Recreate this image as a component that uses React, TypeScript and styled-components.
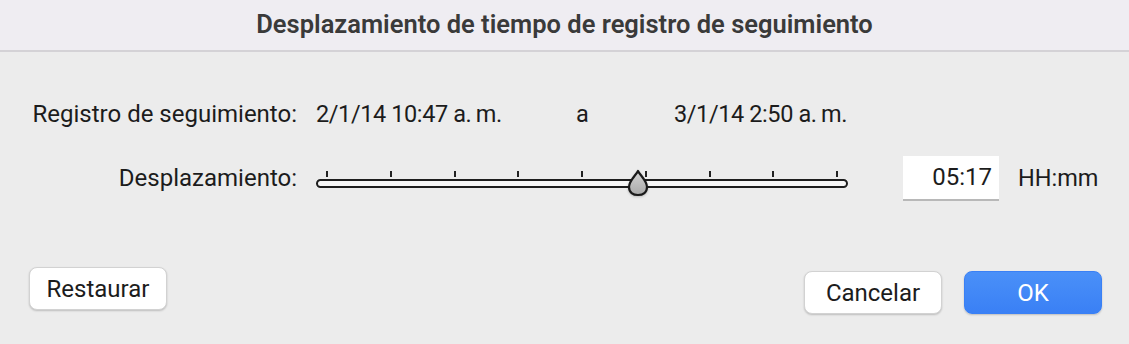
import React from 'react'
import styled, { createGlobalStyle } from 'styled-components'

const TICKS = 9
const OFFSET = 0.605

export default function App() {
  return (
    <>
      <Global />
      <Dialog>
        <TitleBar>Desplazamiento de tiempo de registro de seguimiento</TitleBar>
        <Body>
          <Row>
            <Label>Registro de seguimiento:</Label>
            <Range>
              <Value>2/1/14 10:47 a.{'\u2009'}m.</Value>
              <Value>a</Value>
              <Value>3/1/14 2:50 a.{'\u2009'}m.</Value>
            </Range>
          </Row>
          <Row $gap={18}>
            <Label>Desplazamiento:</Label>
            <Slider>
              <Ticks>
                {Array.from({ length: TICKS }).map((_, i) => (
                  <Tick key={i} />
                ))}
              </Ticks>
              <Track />
              <Knob style={{ left: `${OFFSET * 100}%` }}>
                <svg width="22" height="28" viewBox="0 0 22 28">
                  <defs>
                    <linearGradient id="kg" x1="0" y1="0" x2="0" y2="1">
                      <stop offset="0" stopColor="#d4d4d4" />
                      <stop offset="1" stopColor="#a9a9a9" />
                    </linearGradient>
                  </defs>
                  <path
                    d="M11 2 C13 6 20 12 20 18 C20 23.5 16 26 11 26 C6 26 2 23.5 2 18 C2 12 9 6 11 2 Z"
                    fill="url(#kg)"
                    stroke="#1a1a1a"
                    strokeWidth="2.2"
                    strokeLinejoin="round"
                  />
                </svg>
              </Knob>
            </Slider>
            <TimeField>05:17</TimeField>
            <Unit>HH:mm</Unit>
          </Row>
        </Body>
        <Footer>
          <Button $shift={0}>Restaurar</Button>
          <ButtonGroup>
            <Button $shift={4}>Cancelar</Button>
            <Button $shift={4} $primary>OK</Button>
          </ButtonGroup>
        </Footer>
      </Dialog>
    </>
  )
}

const Global = createGlobalStyle`
  html, body {
    margin: 0;
    padding: 0;
    background: #ececec;
  }
  body {
    font-family: Roboto, "Liberation Sans", sans-serif;
    color: #1c1c1c;
  }
`

const Dialog = styled.div`
  width: 1129px;
  height: 344px;
  display: flex;
  flex-direction: column;
  background: #ececec;
  overflow: hidden;
`

const TitleBar = styled.div`
  height: 52px;
  box-sizing: border-box;
  display: flex;
  align-items: center;
  justify-content: center;
  background: #efedf2;
  border-bottom: 2px solid #d4d2d6;
  font-size: 25.5px;
  font-weight: 600;
  color: #3a3a3a;
  padding-bottom: 2px;
`

const Body = styled.div`
  display: flex;
  flex-direction: column;
  padding-top: 39px;
`

const Row = styled.div<{ $gap?: number }>`
  display: flex;
  align-items: center;
  height: 46px;
  margin-top: ${(p) => p.$gap ?? 0}px;
`

const Label = styled.div`
  width: 297px;
  text-align: right;
  font-size: 24px;
  padding-right: 19px;
  box-sizing: content-box;
`

const Range = styled.div`
  display: grid;
  grid-template-columns: 260px 98px auto;
`

const Value = styled.span`
  font-size: 23.5px;
  letter-spacing: -0.4px;
`

const Slider = styled.div`
  position: relative;
  width: 532px;
  height: 46px;
  display: flex;
  flex-direction: column;
  justify-content: center;
`

const Ticks = styled.div`
  display: flex;
  justify-content: space-between;
  padding: 0 10px;
  height: 6px;
  margin-top: 2px;
`

const Tick = styled.span`
  width: 2px;
  height: 6px;
  background: #222;
`

const Track = styled.div`
  height: 9px;
  box-sizing: border-box;
  margin-top: 2px;
  border: 2px solid #1e1e1e;
  border-radius: 5px;
  background: #f7f7f7;
`

const Knob = styled.div`
  position: absolute;
  top: 14px;
  transform: translateX(-50%);
  line-height: 0;
  filter: drop-shadow(0 1px 1px rgba(0, 0, 0, 0.2));
`

const TimeField = styled.div`
  margin-left: 55px;
  width: 96px;
  height: 45px;
  box-sizing: border-box;
  display: flex;
  align-items: center;
  justify-content: flex-end;
  padding-right: 7px;
  background: #ffffff;
  border-bottom: 2px solid #b8b8b8;
  font-size: 24px;
`

const Unit = styled.span`
  margin-left: 19px;
  font-size: 23.5px;
`

const Footer = styled.div`
  display: flex;
  justify-content: space-between;
  align-items: flex-start;
  padding: 0 27px 0 29px;
  margin-top: 66px;
`

const ButtonGroup = styled.div`
  display: flex;
  gap: 22px;
`

const Button = styled.button<{ $primary?: boolean; $shift: number }>`
  width: 138px;
  height: 43px;
  margin-top: ${(p) => p.$shift}px;
  border-radius: 8px;
  font-family: Roboto, "Liberation Sans", sans-serif;
  font-size: 24px;
  color: ${(p) => (p.$primary ? '#ffffff' : '#1c1c1c')};
  background: ${(p) => (p.$primary ? 'linear-gradient(#4a90f8, #3a80f5)' : '#ffffff')};
  border: 1px solid ${(p) => (p.$primary ? '#3a80f5' : '#d2d2d2')};
  box-shadow: 0 1px 2px rgba(0, 0, 0, 0.2);
  padding: 0;
`
